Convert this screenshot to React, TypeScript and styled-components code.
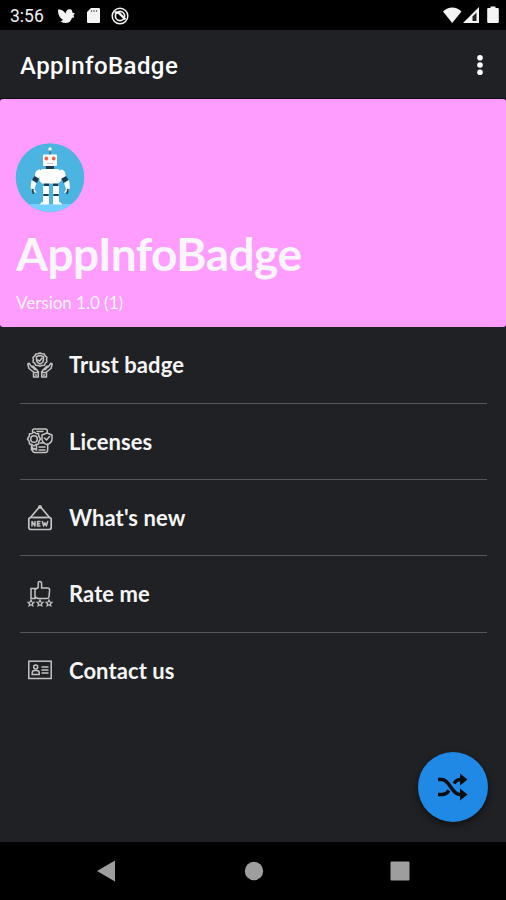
import React from "react";
import styled, { createGlobalStyle } from "styled-components";

const GlobalStyle = createGlobalStyle`
  * { box-sizing: border-box; }
  body { margin: 0; background: #202124; }
  svg { display: block; flex: none; }
`;

const Screen = styled.div`
  width: 506px;
  height: 900px;
  display: flex;
  flex-direction: column;
  position: relative;
  overflow: hidden;
  background: #202124;
  font-family: Lato, sans-serif;
`;

const StatusBar = styled.div`
  height: 30px;
  flex: none;
  display: flex;
  align-items: center;
  padding: 0 7px 0 10px;
  background: #000;
  color: #f1f1f1;
`;

const Clock = styled.span`
  width: 47px;
  font: 400 17.5px/30px Roboto, sans-serif;
  padding-top: 2px;
`;

const Notifications = styled.div`
  display: flex;
  align-items: center;
  gap: 9.5px;
  padding-top: 1px;
`;

const SystemStatus = styled.div`
  margin-left: auto;
`;

const Toolbar = styled.header`
  height: 69px;
  flex: none;
  display: flex;
  align-items: center;
  justify-content: space-between;
  padding: 0 16px 0 20px;
  border-bottom: 1px solid #101012;
`;

const ToolbarTitle = styled.h1`
  margin: 0;
  padding-top: 3px;
  color: #fff;
  font: 500 24px/30px Roboto, sans-serif;
  letter-spacing: 0.43px;
`;

const MenuButton = styled.button`
  border: 0;
  padding: 1px 0 0;
  background: none;
`;

const Banner = styled.section`
  height: 228px;
  flex: none;
  padding: 44px 15px 0;
  border-radius: 3px;
  background: #ff9dff;
  color: #f8f5fb;
`;

const AppName = styled.h2`
  margin: 13px 0 0 1px;
  font-size: 46px;
  line-height: 57px;
  font-weight: 700;
  letter-spacing: -0.52px;
`;

const Version = styled.p`
  margin: 10px 0 0 1px;
  font-size: 17px;
  line-height: 22px;
  letter-spacing: -0.02px;
`;

const List = styled.ul`
  list-style: none;
  margin: 0;
  padding: 0 19px 0 20px;
  flex: 1;
`;

const Row = styled.li`
  height: 76.4px;
  display: flex;
  align-items: center;
  gap: 15px;
  padding-left: 6px;
  color: #f5f5f5;
  font-size: 22px;
  font-weight: 700;
  &:first-child { height: 75.5px; }
  & + & { border-top: 1px solid #57585b; }
`;

const RowLabel = styled.span`
  letter-spacing: 0.08px;
`;

const Fab = styled.button`
  position: absolute;
  right: 18px;
  bottom: 78px;
  width: 70px;
  height: 70px;
  border: 0;
  padding: 0;
  border-radius: 50%;
  display: grid;
  place-items: center;
  background: #2088e5;
  box-shadow: 0 3px 7px rgba(0, 0, 0, 0.5);
`;

const NavBar = styled.nav`
  height: 58px;
  flex: none;
  display: grid;
  grid-template-columns: 180px 147px 145px;
  background: #000;
`;

const NavItem = styled.div<{ $first?: boolean }>`
  display: grid;
  place-items: center;
  padding-left: ${(p) => (p.$first ? "32px" : "0")};
`;

const glyph = {
  width: 28,
  height: 28,
  viewBox: "0 0 28 28",
  fill: "none",
  stroke: "#c4c4c4",
  strokeWidth: 1.5,
  strokeLinejoin: "round" as const,
  strokeLinecap: "round" as const,
};

const TrustIcon = () => (
  <svg {...glyph}>
    <path d="M14 2l2 .8 2.200.1 1 2 1.700 1.400-.4 2.300.4 2.200-1.700 1.500-1 2-2.200.1-2 .8-2-.8-2.200-.1-1-2L7 10.800l.4-2.200L7 6.300l1.800-1.400 1-2 2.200-.1z" />
    <path d="M10.500 5.500L14 4.600l3.500.9v3.300c0 2-1.500 3.500-3.500 4.200-2-.7-3.500-2.200-3.500-4.200zM12 9l1.500 1.300L16 7" />
    <path d="M7.500 26v-5L3 17.500 1.800 13l1.500-.7 2.300 3.500 1.400-.7 4 3.900 1.300 2V26zM20.500 26v-5l4.500-3.500 1.200-4.500-1.500-.7-2.300 3.500-1.400-.7-4 3.900-1.300 2V26zM7.500 21.500h5M15.500 21.500h5M5.600 15.300l3.400 3.400M22.400 15.300L19 18.700" />
    <path d="M9.500 24h1M17.500 24h1" />
  </svg>
);

const LicenseIcon = () => (
  <svg {...glyph}>
    <path d="M6.500 5V3.500C6.500 2.700 7.200 2 8 2h11.500c1.200 0 1.800.8 1.800 2v2M6.500 20v2.500c0 1.800.9 3 2.500 3h10.500c1.600 0 2.200-1.100 2.200-3V17" />
    <path d="M8 5l2 1.500 2.500.2.300 2.500L14.500 12l-1.700 2.400-.3 2.600-2.500.5-2 1.500-2-1.500-2.500-.5-.3-2.600L1.500 12l1.700-2.800.3-2.500L6 6.500z" />
    <circle cx="8" cy="12" r="3.300" />
    <path d="M5.500 18v5l2.500-1.500 2.500 1.500v-5M16 8l5-2 5 2v4c0 2.500-2 4.500-5 5.600-3-1.100-5-3.100-5-5.600zM18.500 11l2 2 3-3.500M11 4.500h6M13 20h6M13 23h6M14 16h3" />
  </svg>
);

const NewIcon = () => (
  <svg {...glyph}>
    <path d="M4.500 13.500L13 3.500M23.500 13.500L15 3.500M7.800 13.500h12.400" strokeWidth="1.700" />
    <circle cx="14" cy="2.900" r="1.200" />
    <rect x="2.800" y="13.500" width="22.400" height="12" rx="2" strokeWidth="1.700" />
    <path d="M6 22v-4.500l3 4.500v-4.500M14 17.500h-2.500V22H14M11.500 19.800h2.200M16.400 17.500l1.200 4.500 1.300-3.300 1.400 3.300 1.400-4.500" strokeWidth="1.500" />
  </svg>
);

const RateIcon = () => (
  <svg {...glyph} strokeLinejoin="miter">
    <path d="M5 8.500h4v10H5zM9 9.500l3.200-2V3c0-1 .5-1.500 1.600-1.500s1.800.8 1.800 2V8h6c1.400 0 2 .7 2 2l-.6 6.700c-.1 1.200-.8 1.800-2 1.800H12l-3-1.500" />
    <path d="M5 20l.9 2 2.100.2-1.600 1.500.4 2.200L5 24.800l-1.900 1.100.5-2.200L2 22.200l2.100-.2zM14 20l.9 2 2.100.2-1.600 1.500.4 2.200-1.800-1.100-1.900 1.100.5-2.200-1.600-1.500 2.100-.2zM23 20l.9 2 2.100.2-1.600 1.500.4 2.200-1.800-1.100-1.900 1.100.5-2.200-1.600-1.500 2.100-.2z" strokeWidth="1.200" />
  </svg>
);

const ContactIcon = () => (
  <svg {...glyph} strokeLinejoin="miter">
    <rect x="2.800" y="5.200" width="22.400" height="17.300" />
    <circle cx="9.700" cy="10.900" r="2" />
    <path d="M6.200 18.500v-1.700c0-1.500 1.200-2.400 2.400-2.400h2.200c1.300 0 2.400.9 2.400 2.400v1.700zM16 11h6M16 14h6M16 17h6" />
  </svg>
);

const Robot = () => (
  <svg width="70" height="69" viewBox="0 0 70 69">
    <defs><clipPath id="avatar"><circle cx="35" cy="34.500" r="34.300" /></clipPath></defs>
    <g clipPath="url(#avatar)">
      <path fill="#4cb4e0" d="M0 0h70v69H0z" />
      <path fill="#72cfff" d="M0 61h70v8H0z" />
      <path stroke="#445c70" strokeWidth="1.200" d="M35 6v6" />
      <circle cx="35" cy="6" r="1.700" fill="#fff" />
      <path fill="#203b50" d="M31 22h8v6h-8zM29 39h5v5h-5zM38 39h5v5h-5z" />
      <rect x="28" y="11.500" width="14" height="11.500" rx="1" fill="#fff" />
      <circle cx="31.300" cy="15.500" r="1.900" fill="#f0644f" />
      <circle cx="38.700" cy="15.500" r="1.900" fill="#f0644f" />
      <path stroke="#b8ced9" d="M32 20.500h6" />
      <path fill="#fff" d="M27 26h16l3 2v10l-3 2.500H27L24.500 38V28z" />
      <path fill="#fff" d="M25 26.500c-3.500 0-5 2.500-5 6l-1 2 5 2 1-4zM45.500 26.500c3.500 0 5 2.500 5 6l1 2-5 2-1-4z" />
      <path fill="#203b50" d="M19.500 33l4.500 2.500-2 4.500-5-3zM51 33l-4.500 2.500 2 4.500 5-3z" />
      <path fill="#f8faff" d="M16.500 37l5 3-2 6 2 4-4-1.500-2-4zM54 37l-5 3 2 6-2 4 4-1.500 2-4z" />
      <path stroke="#2c4a5a" strokeWidth="1.800" d="M17.500 46l1 5M53 46l-1 5" />
      <path fill="#fff" d="M28 43h6v8h-6zM38 43h6v8h-6zM28 53h6v7h-6zM38 53h6v7h-6zM27 59h6l1 1v1.500h-9V61zM39 59h6l2 2v.5h-9V60z" />
      <path stroke="#203b50" strokeWidth="2" d="M28.500 52h5M38.500 52h5" />
    </g>
  </svg>
);

const BirdIcon = () => (
  <svg width="19" height="18" viewBox="0 0 19 18" fill="#f4f4f4">
    <path d="M1 2.500c3-.5 5.500 1 7.500 4 .5-3 2.500-4.500 4.500-4.200 1.700.2 2.500 1.500 2.300 3.200l2.700 1-1.500 1.500.7 2.500-2.200.3c-1 3.500-3 5.200-6.500 5.200-2.200 0-4.100-.7-5.200-2 1.200.1 2.200-.3 2.700-1.300C2.500 11 1 7.500 1 2.500z" />
  </svg>
);

const SdIcon = () => (
  <svg width="15" height="18" viewBox="0 0 15 18">
    <path fill="#f4f4f4" d="M5 1h7.500c1 0 1.500.5 1.500 1.500v12c0 1-.5 1.500-1.500 1.500h-10c-1 0-1.500-.5-1.500-1.500V5z" />
    <path stroke="#777" strokeWidth="1.200" d="M5.500 3v2M8 3v2M10.500 3v2" />
  </svg>
);

const DataSaverIcon = () => (
  <svg width="20" height="20" viewBox="0 0 20 20" fill="none" stroke="#f4f4f4">
    <circle cx="10" cy="10" r="7.800" strokeWidth="1.500" />
    <circle cx="10" cy="10" r="4.600" strokeWidth="1.700" />
    <path d="M4.500 6.500c3-.5 5 .2 6.500 2.500l4.500 4.500" strokeWidth="2.300" />
  </svg>
);

const rows = [
  { label: "Trust badge", Icon: TrustIcon },
  { label: "Licenses", Icon: LicenseIcon },
  { label: "What's new", Icon: NewIcon },
  { label: "Rate me", Icon: RateIcon },
  { label: "Contact us", Icon: ContactIcon },
];

export default function App() {
  return (
    <Screen>
      <GlobalStyle />
      <StatusBar>
        <Clock>3:56</Clock>
        <Notifications>
          <BirdIcon />
          <SdIcon />
          <DataSaverIcon />
        </Notifications>
        <SystemStatus>
          <svg width="57" height="20" viewBox="0 0 57 20" fill="#f4f4f4">
            <path d="M1 6.500C6.500 1 14 1 19.500 6.500L10.200 18z" />
            <path d="M21 18L37 2v16z" />
            <path fill="#222" d="M30.500 11.500l4-4V16h-4z" />
            <path d="M46.500 3h2V1.500h5V3h2c.8 0 1.300.5 1.300 1.300v12.400c0 .8-.5 1.300-1.300 1.300h-9c-.8 0-1.300-.5-1.300-1.300V4.300c0-.8.5-1.300 1.300-1.300z" />
          </svg>
        </SystemStatus>
      </StatusBar>
      <Toolbar>
        <ToolbarTitle>AppInfoBadge</ToolbarTitle>
        <MenuButton aria-label="More options">
          <svg width="20" height="24" viewBox="0 0 20 24" fill="#fff">
            <circle cx="10" cy="4.700" r="2.800" /><circle cx="10" cy="12" r="2.800" /><circle cx="10" cy="19.300" r="2.800" />
          </svg>
        </MenuButton>
      </Toolbar>
      <Banner>
        <Robot />
        <AppName>AppInfoBadge</AppName>
        <Version>Version 1.0 (1)</Version>
      </Banner>
      <List>
        {rows.map(({ label, Icon }) => (
          <Row key={label}><Icon /><RowLabel>{label}</RowLabel></Row>
        ))}
      </List>
      <Fab aria-label="Shuffle">
        <svg width="32" height="30" viewBox="0 0 32 30" fill="none" stroke="#0b0d11" strokeWidth="3.400">
          <path d="M1 7.500h4c7.500 0 10 15 17.500 15H25M1 22.500h4.500c3 0 5-1.800 6.500-4M17 11.500c1.500-2.500 3.500-4 6.500-4H25" />
          <path fill="#0b0d11" stroke="none" d="M23 1.500l7.500 6-7.500 6zM23 16.500l7.500 6-7.500 6z" />
        </svg>
      </Fab>
      <NavBar>
        <NavItem $first><svg width="20" height="22" viewBox="0 0 20 22"><path fill="#9e9e9e" d="M1 11L19 .5v21z" /></svg></NavItem>
        <NavItem><svg width="20" height="20" viewBox="0 0 20 20"><circle cx="10" cy="10" r="9.200" fill="#9e9e9e" /></svg></NavItem>
        <NavItem><svg width="20" height="20" viewBox="0 0 20 20"><rect x=".5" y=".5" width="19" height="19" rx="1" fill="#9e9e9e" /></svg></NavItem>
      </NavBar>
    </Screen>
  );
}
